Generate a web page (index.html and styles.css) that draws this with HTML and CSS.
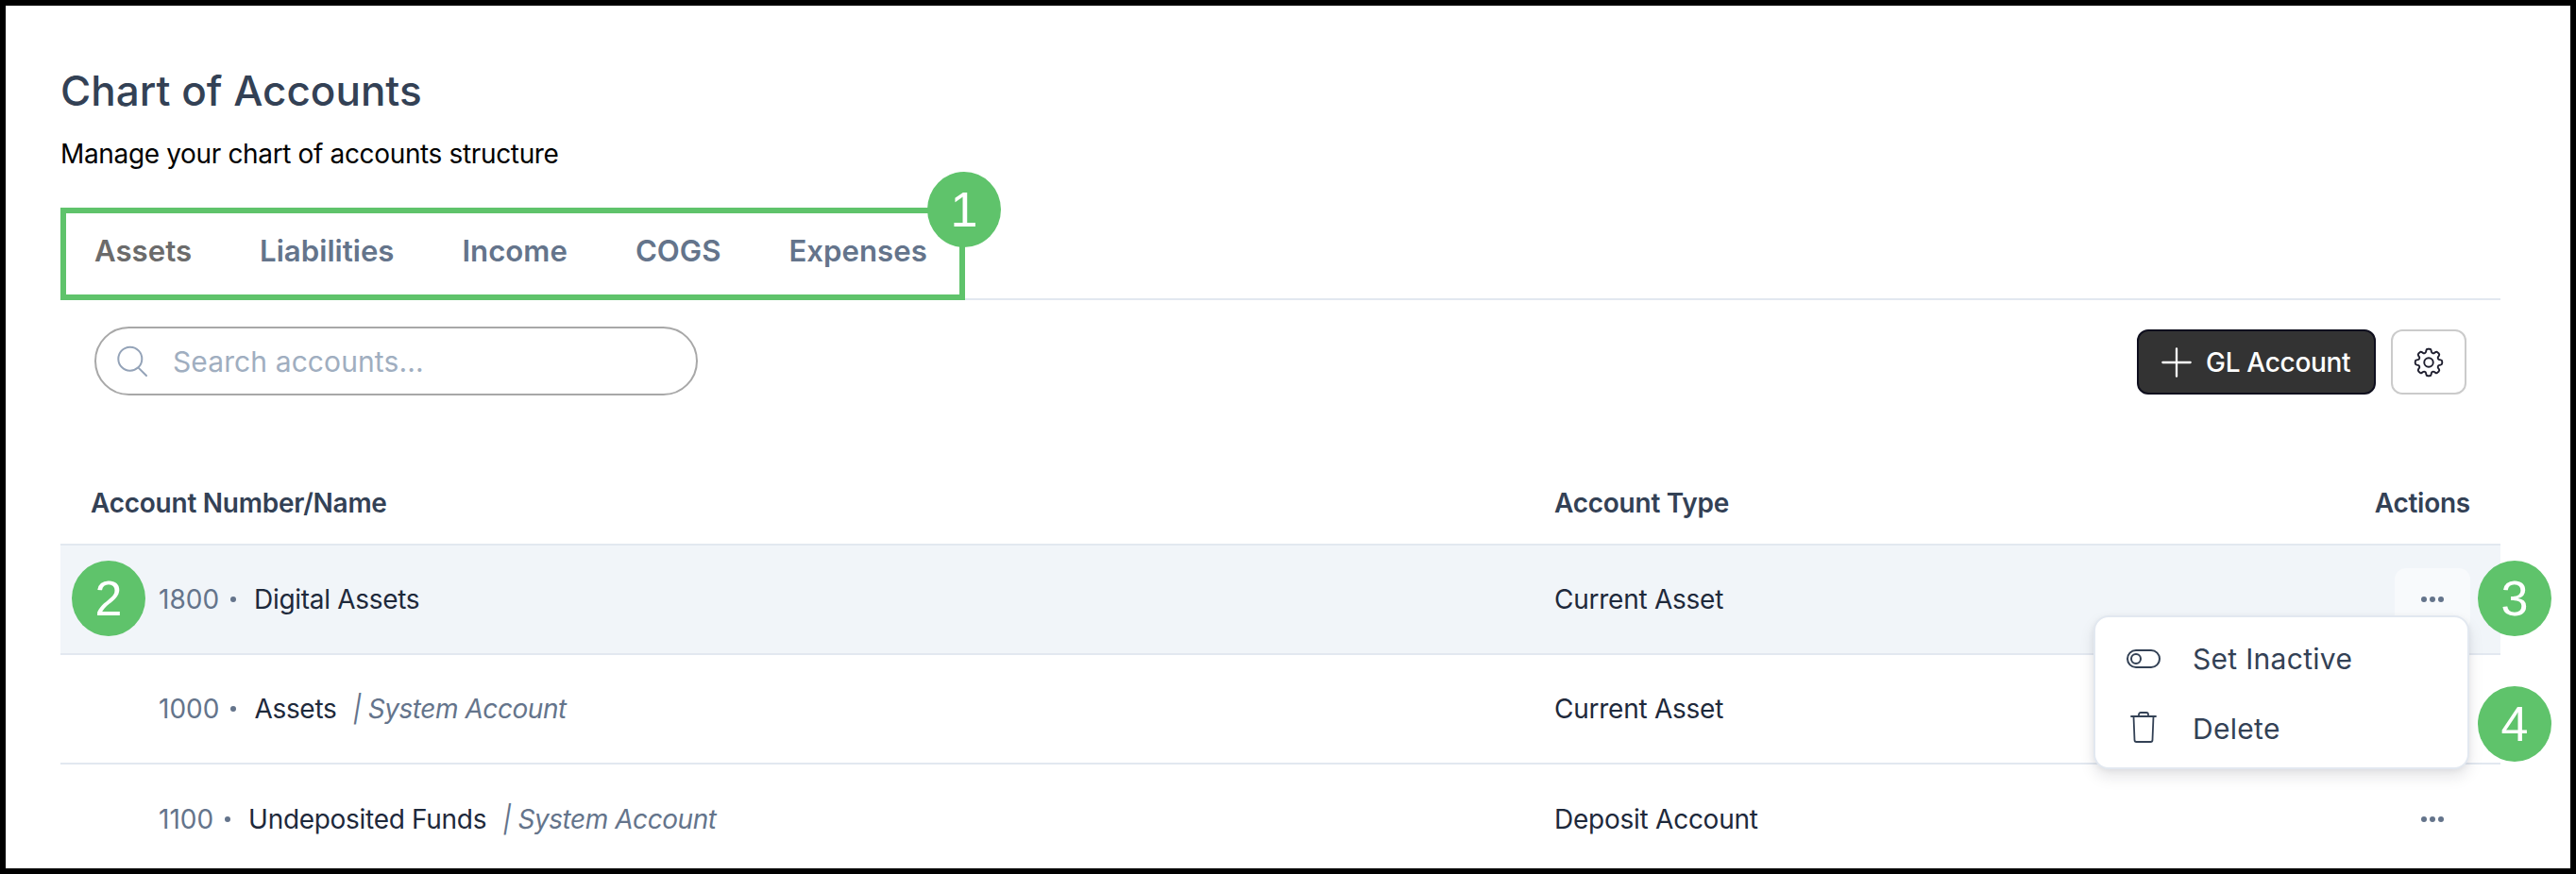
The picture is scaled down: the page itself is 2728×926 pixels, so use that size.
FILE: index.html
```html
<!DOCTYPE html>
<html lang="en">
<head>
<meta charset="utf-8">
<title>Chart of Accounts</title>
<link rel="stylesheet" href="styles.css">
</head>
<body>
<main class="frame">
  <header class="page-head">
    <h1 class="title">Chart of Accounts</h1>
    <p class="subtitle">Manage your chart of accounts structure</p>
  </header>

  <nav class="tabs">
    <a class="tab tab-active">Assets</a>
    <a class="tab">Liabilities</a>
    <a class="tab">Income</a>
    <a class="tab">COGS</a>
    <a class="tab">Expenses</a>
  </nav>

  <div class="toolbar">
    <label class="search">
      <svg class="search-icon" viewBox="0 0 24 24" fill="none" stroke="currentColor" stroke-width="1.2" stroke-linecap="round" stroke-linejoin="round"><path d="M21 21l-5.2-5.2M15.800 15.800A7.500 7.500 0 1 0 5.200 5.200a7.500 7.500 0 0 0 10.600 10.600z"/></svg>
      <span class="search-text">Search accounts...</span>
    </label>
    <div class="toolbar-actions">
      <button class="btn-primary">
        <svg class="plus-icon" viewBox="0 0 24 24" fill="none" stroke="currentColor" stroke-width="1.7" stroke-linecap="round"><path d="M12 1v22M1 12h22"/></svg>
        <span>GL Account</span>
      </button>
      <button class="btn-icon">
        <svg class="gear-icon" viewBox="0 0 24 24" fill="none" stroke="currentColor" stroke-width="1.2" stroke-linecap="round" stroke-linejoin="round"><path d="M10.343 3.94c.09-.542.56-.94 1.11-.94h1.093c.55 0 1.02.398 1.11.94l.149.894c.07.424.384.764.78.93.398.164.855.142 1.205-.108l.737-.527a1.125 1.125 0 0 1 1.45.12l.773.774c.39.389.44 1.002.12 1.45l-.527.737c-.25.35-.272.806-.107 1.204.165.397.505.71.93.78l.893.15c.543.09.94.56.94 1.109v1.094c0 .55-.397 1.02-.94 1.11l-.893.149c-.425.07-.765.383-.93.78-.165.398-.143.854.107 1.204l.527.738c.32.447.269 1.06-.12 1.45l-.774.773a1.125 1.125 0 0 1-1.449.12l-.738-.527c-.35-.25-.806-.272-1.203-.107-.397.165-.71.505-.781.929l-.149.894c-.09.542-.56.94-1.11.94h-1.094c-.55 0-1.019-.398-1.11-.94l-.148-.894c-.071-.424-.384-.764-.781-.93-.398-.164-.854-.142-1.204.108l-.738.527c-.447.32-1.06.269-1.45-.12l-.773-.774a1.125 1.125 0 0 1-.12-1.45l.527-.737c.25-.35.273-.806.108-1.204-.165-.397-.506-.71-.93-.78l-.894-.15c-.542-.09-.94-.56-.94-1.109v-1.094c0-.55.398-1.02.94-1.11l.894-.149c.424-.07.765-.383.93-.78.165-.398.143-.854-.107-1.204l-.527-.738a1.125 1.125 0 0 1 .12-1.45l.773-.773a1.125 1.125 0 0 1 1.45-.12l.737.527c.35.25.807.272 1.204.107.397-.165.71-.505.78-.929l.15-.894z"/><path d="M15 12a3 3 0 1 1-6 0 3 3 0 0 1 6 0z"/></svg>
      </button>
    </div>
  </div>

  <section class="table">
    <div class="row row-head">
      <div class="cell-name">Account Number/Name</div>
      <div class="cell-type">Account Type</div>
      <div class="cell-actions">Actions</div>
    </div>

    <div class="row row-body row-hover">
      <div class="cell-name"><span class="num">1800</span><span class="dot"></span><span class="name">Digital Assets</span></div>
      <div class="cell-type">Current Asset</div>
      <div class="cell-actions"><button class="more more-open"><svg class="dots" viewBox="0 0 24 6" fill="currentColor"><circle cx="3" cy="3" r="3"/><circle cx="12" cy="3" r="3"/><circle cx="21" cy="3" r="3"/></svg></button></div>
    </div>

    <div class="row row-body">
      <div class="cell-name"><span class="num">1000</span><span class="dot"></span><span class="name">Assets</span><em class="sys">| System Account</em></div>
      <div class="cell-type">Current Asset</div>
      <div class="cell-actions"></div>
    </div>

    <div class="row row-body row-last">
      <div class="cell-name"><span class="num">1100</span><span class="dot"></span><span class="name">Undeposited Funds</span><em class="sys">| System Account</em></div>
      <div class="cell-type">Deposit Account</div>
      <div class="cell-actions"><button class="more"><svg class="dots" viewBox="0 0 24 6" fill="currentColor"><circle cx="3" cy="3" r="3"/><circle cx="12" cy="3" r="3"/><circle cx="21" cy="3" r="3"/></svg></button></div>
    </div>
  </section>

  <div class="menu">
    <div class="menu-item">
      <span class="menu-slot"><svg class="toggle-icon" viewBox="0 0 36 20" fill="none" stroke="currentColor" stroke-width="2"><rect x="1" y="1" width="34" height="18" rx="9"/><circle cx="10" cy="10" r="5"/></svg></span>
      <span>Set Inactive</span>
    </div>
    <div class="menu-item">
      <span class="menu-slot"><svg class="trash-icon" viewBox="0 0 28 33" fill="none" stroke="currentColor" stroke-width="1.800" stroke-linecap="round" stroke-linejoin="round"><path d="M1 5h26M9 5V3a2 2 0 0 1 2-2h6a2 2 0 0 1 2 2v2M3.500 5l1 25a2 2 0 0 0 2 2h15a2 2 0 0 0 2-2l1-25"/></svg></span>
      <span>Delete</span>
    </div>
  </div>

  <div class="tabs-outline"></div>
  <div class="badge badge-1">1</div>
  <div class="badge badge-2">2</div>
  <div class="badge badge-3">3</div>
  <div class="badge badge-4">4</div>
</main>
</body>
</html>
```

FILE: styles.css
```css
* { box-sizing: border-box; }
html, body { margin: 0; height: 100%; background: #000; }
body { padding: 6px; font-family: Inter, "Liberation Sans", sans-serif; overflow: hidden; }

.frame {
  position: relative;
  height: 914px;
  background: #fff;
  padding: 0 74px 0 58px;
  overflow: hidden;
}

.page-head { padding-top: 66px; }
.title { margin: 0; font-size: 44px; line-height: 48px; font-weight: 500; color: #334155; }
.subtitle { margin: 26px 0 0; font-size: 28px; line-height: 34px; font-weight: 400; color: #000; letter-spacing: -.35px; }

.tabs {
  display: flex;
  gap: 72px;
  height: 138px;
  padding: 68px 0 0 36px;
  border-bottom: 2px solid #e2e8f0;
}
.tab { font-size: 31.2px; line-height: 36px; font-weight: 600; color: #64748b; }
.tab-active { color: #6b6b6b; }

.toolbar {
  display: flex;
  justify-content: space-between;
  align-items: flex-start;
  padding: 28px 36px 0 36px;
}
.search {
  display: flex;
  align-items: center;
  gap: 23px;
  width: 639px;
  height: 73px;
  padding: 0 18px;
  border: 2px solid #a8a8a8;
  border-radius: 37px;
}
.search-icon { width: 40px; height: 40px; color: #94a3b8; flex: none; }
.search-text { font-size: 30px; color: #a0aec0; letter-spacing: .1px; }

.toolbar-actions { display: flex; gap: 16px; margin-top: 3px; }
.btn-primary {
  display: flex;
  align-items: center;
  gap: 15px;
  width: 253px;
  height: 69px;
  padding: 0 24px;
  background: #333;
  color: #fff;
  border: 2px solid #0f0f1e;
  border-radius: 12px;
  font: 500 28px Inter, sans-serif;
  letter-spacing: -.3px;
  white-space: nowrap;
}
.plus-icon { width: 32px; height: 32px; flex: none; }
.btn-icon {
  display: flex;
  align-items: center;
  justify-content: center;
  width: 80px;
  height: 69px;
  padding: 0;
  background: #fff;
  color: #1e1e2e;
  border: 2px solid #cbcbcb;
  border-radius: 12px;
}
.gear-icon { width: 38px; height: 38px; }

.table { margin-top: 71px; }
.row {
  display: flex;
  align-items: center;
  padding: 0 32px;
  font-size: 28px;
  letter-spacing: -.25px;
}
.row-head { height: 88px; font-weight: 600; color: #334155; border-bottom: 2px solid #e2e8f0; }
.row-body { height: 116px; color: #1e293b; border-bottom: 2px solid #e2e8f0; }
.row-hover { background: #f1f5f9; }
.row-last { border-bottom: 0; }
.row-body .cell-name { padding-left: 72px; }

.cell-name { display: flex; align-items: center; flex: 0 0 1550px; }
.cell-type { flex: 1 1 auto; }
.cell-actions { flex: none; display: flex; justify-content: flex-end; }

.num { color: #64748b; letter-spacing: 0; }
.dot { width: 6px; height: 6px; margin: 0 19px 0 12px; border-radius: 50%; background: #64748b; }
.name { color: #1e293b; letter-spacing: -.3px; }
.sys { margin-left: 17px; color: #64748b; font-style: italic; letter-spacing: -.45px; }

.more {
  display: flex;
  align-items: center;
  justify-content: center;
  width: 80px;
  height: 66px;
  padding: 0;
  background: transparent;
  color: #64748b;
  border: 0;
  border-radius: 12px;
}
.more-open { background: #f8fafc; }
.dots { width: 24px; height: 6px; }

.menu {
  position: absolute;
  left: 2211px;
  top: 646px;
  width: 398px;
  height: 163px;
  padding: 7px 0;
  background: #fff;
  border: 2px solid #e2e8f0;
  border-radius: 16px;
  box-shadow: 0 8px 16px rgba(15, 23, 42, .10), 0 2px 6px rgba(15, 23, 42, .06);
  color: #334155;
}
.menu-item {
  display: flex;
  align-items: center;
  height: 74px;
  font-size: 30px;
  letter-spacing: .3px;
}
.menu-slot { flex: 0 0 103px; display: flex; justify-content: center; padding-right: 1px; }
.toggle-icon { width: 36px; height: 20px; }
.trash-icon { width: 28px; height: 33px; margin-top: -3px; }

.tabs-outline {
  position: absolute;
  left: 58px;
  top: 214px;
  width: 958px;
  height: 98px;
  border: 6px solid #5fc36b;
}
.badge {
  position: absolute;
  width: 78px;
  height: 80px;
  display: flex;
  align-items: center;
  justify-content: center;
  border-radius: 50%;
  background: #5fc36b;
  color: #fff;
  font-family: "Liberation Sans", Arial, sans-serif;
  font-size: 52px;
}
.badge-1 { left: 976px; top: 176px; }
.badge-2 { left: 70px; top: 588px; }
.badge-3 { left: 2618px; top: 588px; }
.badge-4 { left: 2618px; top: 721px; }
```
